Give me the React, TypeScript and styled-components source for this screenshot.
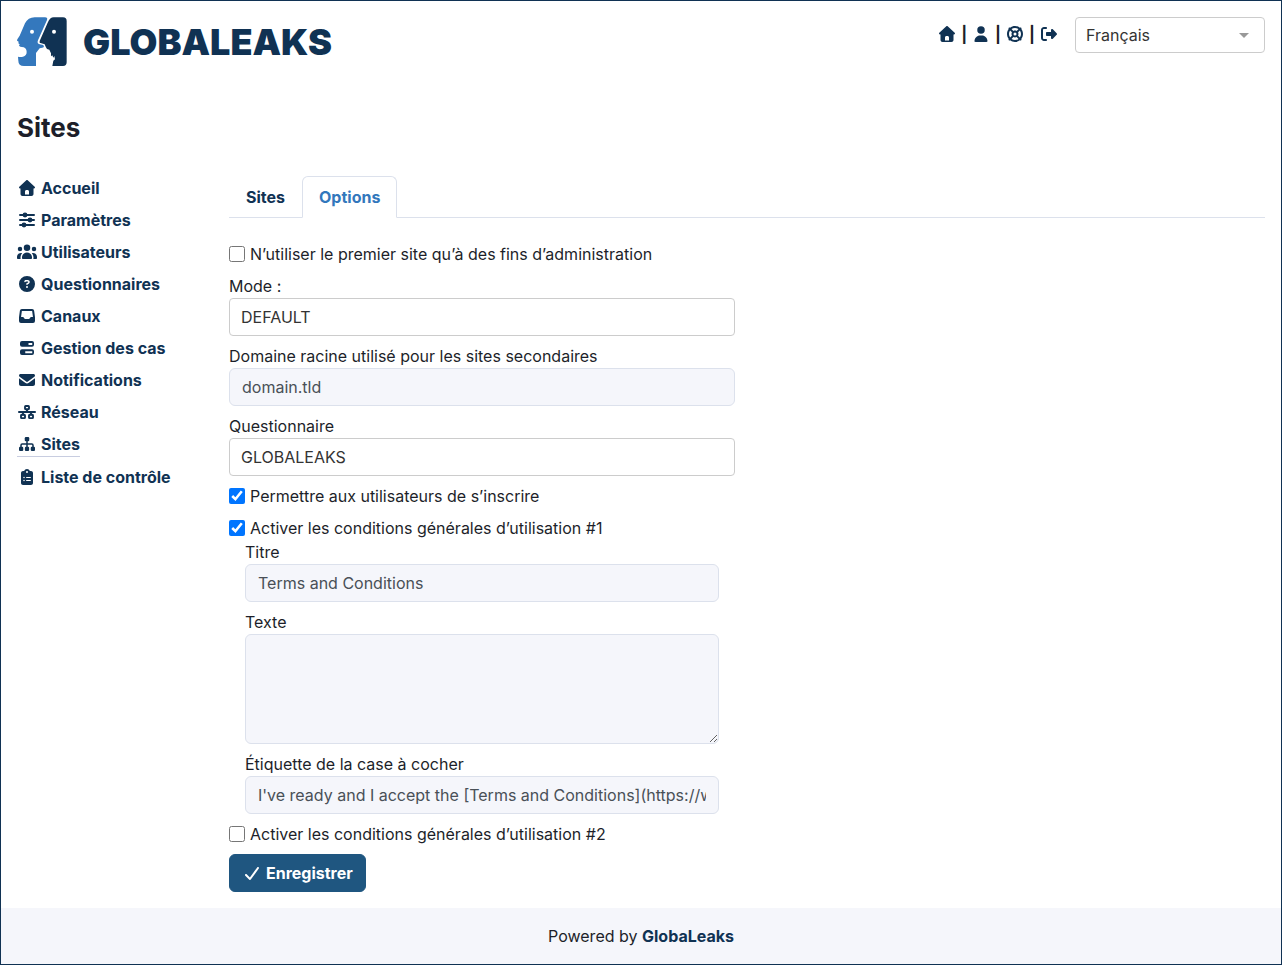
import React from "react";
import styled, { createGlobalStyle, css } from "styled-components";
import {
  FaCircleQuestion,
  FaClipboardList,
  FaLifeRing,
  FaRightFromBracket,
} from "react-icons/fa6";

const navy = "#103253";
const ink = "#1d1f2a";
const line = "#dce1ec";
const mist = "#f5f6fb";

const GlobalStyle = createGlobalStyle`
  *, *::before, *::after { box-sizing: border-box; }
  body {
    margin: 0;
    background: #fff;
    color: ${ink};
    font-family: Inter, "Liberation Sans", sans-serif;
    font-size: 16px;
    line-height: 24px;
  }
  a { color: ${navy}; font-weight: 700; text-decoration: none; }
`;

const Page = styled.div`
  display: flex;
  flex-direction: column;
  min-height: 100vh;
  border: 1px solid ${navy};
`;

const Header = styled.header`
  display: flex;
  justify-content: space-between;
  align-items: flex-start;
  padding: 16px 16px 0;
`;

const Brand = styled.a`
  display: flex;
  align-items: center;
  gap: 16px;
  height: 50px;
  font-size: 36px;
  font-weight: 900;
  line-height: 50px;
`;

const HeaderTools = styled.div`
  display: flex;
  gap: 16px;
`;

const QuickLinks = styled.nav`
  display: flex;
  align-items: center;
  gap: 4px;
  height: 34px;
  font-weight: 700;
`;

const IconLink = styled.a`
  display: flex;
`;

const IconBox = styled.span`
  display: inline-flex;
  flex: none;
  justify-content: center;
  align-items: center;
  width: 20px;
  height: 16px;

  svg {
    flex: none;
    width: auto;
    height: 16px;
  }
`;

const LanguageBox = styled.div`
  display: grid;
  align-items: center;
  width: 190px;

  > * { grid-area: 1 / 1; }
  > svg { justify-self: end; margin-right: 16px; pointer-events: none; }
`;

const Select = styled.select<{ $compact?: boolean }>`
  appearance: none;
  display: block;
  width: 100%;
  height: ${(p) => (p.$compact ? 36 : 38)}px;
  padding: 0 ${(p) => (p.$compact ? 10 : 11)}px;
  border: 1px solid #ccc;
  border-radius: 4px;
  background: #fff;
  color: #333;
  font: inherit;
`;

const Title = styled.h1`
  margin: 45px 16px 32px;
  font-size: 26px;
  font-weight: 700;
  line-height: 32px;
`;

const Columns = styled.div`
  display: grid;
  grid-template-columns: repeat(12, 1fr);
  column-gap: 24px;
  padding: 0 16px 16px;
`;

const SideNav = styled.nav`
  grid-column: span 2;
  display: flex;
  flex-direction: column;
  align-items: flex-start;
  gap: 8px;
`;

const SideLink = styled.a<{ $active?: boolean }>`
  display: flex;
  align-items: center;
  gap: 4px;
  white-space: nowrap;
  ${(p) => p.$active && css`border-bottom: 1px solid #c8cde0;`}
`;

const Content = styled.main`
  grid-column: span 10;
`;

const Tabs = styled.div`
  display: flex;
  margin-bottom: 24px;
  border-bottom: 1px solid ${line};
`;

const Tab = styled.button<{ $active?: boolean }>`
  margin-bottom: -1px;
  padding: 8px 16px;
  border: 1px solid transparent;
  border-radius: 6px 6px 0 0;
  background: none;
  color: ${navy};
  font: inherit;
  font-weight: 700;
  ${(p) =>
    p.$active &&
    css`
      border-color: ${line} ${line} #fff;
      background: #fff;
      color: #3277bc;
    `}
`;

const FormGrid = styled.div`
  display: grid;
  grid-template-columns: 1fr 1fr;
  column-gap: 24px;
`;

const Form = styled.form`
  display: flex;
  flex-direction: column;
  align-items: stretch;
  gap: 8px;
`;

const Field = styled.div`
  display: flex;
  flex-direction: column;
`;

const Indented = styled.div`
  display: flex;
  flex-direction: column;
  gap: 8px;
  padding: 0 16px;
`;

const CheckLabel = styled.label`
  display: flex;
  align-items: center;
  gap: 5px;
`;

const Checkbox = styled.input`
  width: 16px;
  height: 16px;
  margin: 0;
`;

const control = css`
  display: block;
  width: 100%;
  padding: 6px 12px;
  border: 1px solid ${line};
  border-radius: 6px;
  background: ${mist};
  color: #495057;
  font: inherit;
`;

const TextInput = styled.input`
  ${control}
  height: 38px;
`;

const TextArea = styled.textarea`
  ${control}
  height: 110px;
`;

const SaveButton = styled.button`
  display: flex;
  align-items: center;
  align-self: flex-start;
  gap: 4px;
  padding: 6px 12px;
  border: 1px solid #1f5680;
  border-radius: 6px;
  background: #1f5680;
  color: #fff;
  font: inherit;
  font-weight: 700;
`;

const Footer = styled.footer`
  margin-top: auto;
  padding: 16px;
  background: ${mist};
  text-align: center;
`;

const glyph = (width: number, d: string) => () => (
  <svg viewBox={`0 0 ${width} 512`} fill="currentColor" fillRule="evenodd" aria-hidden="true">
    <path d={d} />
  </svg>
);

const House = glyph(
  512,
  "M277.8 8.6c-12.3-11.4-31.3-11.4-43.5 0l-224 208c-9.6 9-12.8 22.9-8 35.1S18.8 272 32 272l16 0 0 176c0 35.3 28.7 64 64 64l288 0c35.3 0 64-28.7 64-64l0-176 16 0c13.2 0 25-8.1 29.8-20.3s1.6-26.2-8-35.1l-224-208zM240 320l32 0c26.5 0 48 21.5 48 48l0 96-128 0 0-96c0-26.5 21.5-48 48-48z"
);
const User = glyph(
  448,
  "M224 248a120 120 0 1 0 0-240 120 120 0 1 0 0 240zm-29.7 56C95.8 304 16 383.8 16 482.3 16 498.7 29.3 512 45.7 512l356.6 0c16.4 0 29.7-13.3 29.7-29.7 0-98.5-79.8-178.3-178.3-178.3l-59.4 0z"
);
const Users = glyph(
  640,
  "M320 16a104 104 0 1 1 0 208 104 104 0 1 1 0-208zM96 88a72 72 0 1 1 0 144 72 72 0 1 1 0-144zM0 416c0-70.7 57.3-128 128-128 12.8 0 25.2 1.9 36.9 5.4-32.9 36.8-52.9 85.4-52.9 138.6l0 16c0 11.4 2.4 22.2 6.7 32L32 480c-17.7 0-32-14.3-32-32l0-32zm521.3 64c4.3-9.8 6.7-20.6 6.7-32l0-16c0-53.2-20-101.8-52.9-138.6 11.7-3.5 24.1-5.4 36.9-5.4 70.7 0 128 57.3 128 128l0 32c0 17.7-14.3 32-32 32l-86.7 0zM472 160a72 72 0 1 1 144 0 72 72 0 1 1-144 0zM160 432c0-88.4 71.6-160 160-160s160 71.6 160 160l0 16c0 17.7-14.3 32-32 32l-256 0c-17.7 0-32-14.3-32-32l0-16z"
);
const Envelope = glyph(
  512,
  "M48 64c-26.5 0-48 21.5-48 48 0 15.1 7.1 29.3 19.2 38.4l208 156c17.1 12.8 40.5 12.8 57.6 0l208-156c12.1-9.1 19.2-23.3 19.2-38.4 0-26.5-21.5-48-48-48L48 64zM0 196L0 384c0 35.3 28.7 64 64 64l384 0c35.3 0 64-28.7 64-64l0-188-198.4 148.8c-34.1 25.6-81.1 25.6-115.2 0L0 196z"
);
const Check = glyph(
  448,
  "M434.8 70.1c14.3 10.4 17.5 30.4 7.1 44.7l-256 352c-5.5 7.6-14 12.3-23.4 13.1s-18.5-2.7-25.1-9.3l-128-128c-12.5-12.5-12.5-32.8 0-45.3s32.8-12.5 45.3 0l101.5 101.5 234-321.7c10.4-14.3 30.4-17.5 44.7-7.1z"
);
const Inbox = glyph(
  512,
  "M92 32H420Q478 32 484 87L511 286Q512 291 512 295V416Q512 480 448 480H64Q0 480 0 416V295Q0 291 1 286L28 87Q34 32 92 32ZM92 96L65 288H124Q142 288 153 305L167 330Q176 352 196 352H316Q336 352 345 330L359 305Q370 288 388 288H447L420 96Z"
);
const Cases = glyph(
  448,
  "M64 32H384Q448 32 448 96V152Q448 216 384 216H64Q0 216 0 152V96Q0 32 64 32ZM272 92V156H392V92ZM64 296H384Q448 296 448 360V416Q448 480 384 480H64Q0 480 0 416V360Q0 296 64 296ZM168 356V420H392V356Z"
);

const Sliders = () => (
  <svg viewBox="0 0 512 512" fill="currentColor" aria-hidden="true">
    <path d="M32 96H480M32 256H480M32 416H480" stroke="currentColor" strokeWidth="64" strokeLinecap="round" />
    <circle cx="192" cy="96" r="78" />
    <circle cx="352" cy="256" r="78" />
    <circle cx="160" cy="416" r="78" />
  </svg>
);

const Network = () => (
  <svg viewBox="0 0 576 512" fill="none" stroke="currentColor" strokeWidth="60" aria-hidden="true">
    <path d="M30 256H546M288 180V256M160 256V340M416 256V340" strokeLinecap="round" />
    <rect x="224" y="62" width="128" height="106" rx="22" />
    <rect x="96" y="344" width="128" height="106" rx="22" />
    <rect x="352" y="344" width="128" height="106" rx="22" />
  </svg>
);

const Sitemap = () => (
  <svg viewBox="0 0 512 512" fill="currentColor" aria-hidden="true">
    <path d="M256 120V380M64 380V292Q64 256 100 256H412Q448 256 448 292V380" fill="none" stroke="currentColor" strokeWidth="48" />
    <rect x="184" y="32" width="144" height="136" rx="36" />
    <rect x="0" y="344" width="136" height="136" rx="36" />
    <rect x="188" y="344" width="136" height="136" rx="36" />
    <rect x="376" y="344" width="136" height="136" rx="36" />
  </svg>
);

const LogoMark = () => (
  <svg width="50" height="50" viewBox="0 0 150 150" aria-hidden="true">
    <path
      fill="#3478bd"
      d="M53 1H84Q93 1 90 9L63 70Q59 80 68 82L79 84L81 90L76 92L68 94L57 108L57 147H21Q4 147 4 131L3 119Q9 121 18 119Q29 116 29 105Q29 95 20 91L10 89L6 86L8 82L4 79L5 74L0 71L1 67L8 56L24 19Q33 1 53 1Z"
    />
    <path
      fill={navy}
      d="M110 1H138Q149 1 149 12V136Q149 147 138 147H106L109 131L114 127L112 117L109 122L106 115L102 118L102 109L97 98L90 96L86 89L83 82L68 77L68 72L92 17Q99 1 110 1Z"
    />
    <circle cx="45" cy="44" r="6" fill="#fff" />
    <circle cx="111" cy="44" r="6" fill="#fff" />
  </svg>
);

const quickLinks = [
  { label: "Accueil", Icon: House },
  { label: "Compte", Icon: User },
  { label: "Aide", Icon: FaLifeRing },
  { label: "Déconnexion", Icon: FaRightFromBracket },
];

const sections = [
  { label: "Accueil", Icon: House },
  { label: "Paramètres", Icon: Sliders },
  { label: "Utilisateurs", Icon: Users },
  { label: "Questionnaires", Icon: FaCircleQuestion },
  { label: "Canaux", Icon: Inbox },
  { label: "Gestion des cas", Icon: Cases },
  { label: "Notifications", Icon: Envelope },
  { label: "Réseau", Icon: Network },
  { label: "Sites", Icon: Sitemap, active: true },
  { label: "Liste de contrôle", Icon: FaClipboardList },
];

export default function App() {
  return (
    <>
      <GlobalStyle />
      <Page>
        <Header>
          <Brand href="#">
            <LogoMark />
            GLOBALEAKS
          </Brand>
          <HeaderTools>
            <QuickLinks>
              {quickLinks.map(({ label, Icon }, i) => (
                <React.Fragment key={label}>
                  {i > 0 && <span>|</span>}
                  <IconLink href="#" aria-label={label}>
                    <IconBox>
                      <Icon />
                    </IconBox>
                  </IconLink>
                </React.Fragment>
              ))}
            </QuickLinks>
            <LanguageBox>
              <Select $compact aria-label="Langue" defaultValue="fr">
                <option value="fr">Français</option>
              </Select>
              <svg width="10" height="5" viewBox="0 0 10 5" aria-hidden="true">
                <path d="M0 0H10L5 5Z" fill="#999" />
              </svg>
            </LanguageBox>
          </HeaderTools>
        </Header>

        <Title>Sites</Title>

        <Columns>
          <SideNav>
            {sections.map(({ label, Icon, active }) => (
              <SideLink key={label} href="#" $active={active}>
                <IconBox>
                  <Icon />
                </IconBox>
                {label}
              </SideLink>
            ))}
          </SideNav>

          <Content>
            <Tabs role="tablist">
              <Tab type="button" role="tab" aria-selected={false}>
                Sites
              </Tab>
              <Tab type="button" role="tab" aria-selected $active>
                Options
              </Tab>
            </Tabs>

            <FormGrid>
              <Form>
                <CheckLabel>
                  <Checkbox type="checkbox" />
                  N’utiliser le premier site qu’à des fins d’administration
                </CheckLabel>
                <Field>
                  <label htmlFor="mode">Mode :</label>
                  <Select id="mode">
                    <option>DEFAULT</option>
                  </Select>
                </Field>
                <Field>
                  <label htmlFor="domain">Domaine racine utilisé pour les sites secondaires</label>
                  <TextInput id="domain" defaultValue="domain.tld" />
                </Field>
                <Field>
                  <label htmlFor="questionnaire">Questionnaire</label>
                  <Select id="questionnaire">
                    <option>GLOBALEAKS</option>
                  </Select>
                </Field>
                <CheckLabel>
                  <Checkbox type="checkbox" defaultChecked />
                  Permettre aux utilisateurs de s’inscrire
                </CheckLabel>
                <div>
                  <CheckLabel>
                    <Checkbox type="checkbox" defaultChecked />
                    Activer les conditions générales d’utilisation #1
                  </CheckLabel>
                  <Indented>
                    <Field>
                      <label htmlFor="tos-title">Titre</label>
                      <TextInput id="tos-title" defaultValue="Terms and Conditions" />
                    </Field>
                    <Field>
                      <label htmlFor="tos-text">Texte</label>
                      <TextArea id="tos-text" />
                    </Field>
                    <Field>
                      <label htmlFor="tos-checkbox">Étiquette de la case à cocher</label>
                      <TextInput
                        id="tos-checkbox"
                        defaultValue="I've ready and I accept the [Terms and Conditions](https://www.globaleaks.org)"
                      />
                    </Field>
                  </Indented>
                </div>
                <CheckLabel>
                  <Checkbox type="checkbox" />
                  Activer les conditions générales d’utilisation #2
                </CheckLabel>
                <SaveButton type="button">
                  <IconBox>
                    <Check />
                  </IconBox>
                  Enregistrer
                </SaveButton>
              </Form>
            </FormGrid>
          </Content>
        </Columns>

        <Footer>
          Powered by <a href="#">GlobaLeaks</a>
        </Footer>
      </Page>
    </>
  );
}
